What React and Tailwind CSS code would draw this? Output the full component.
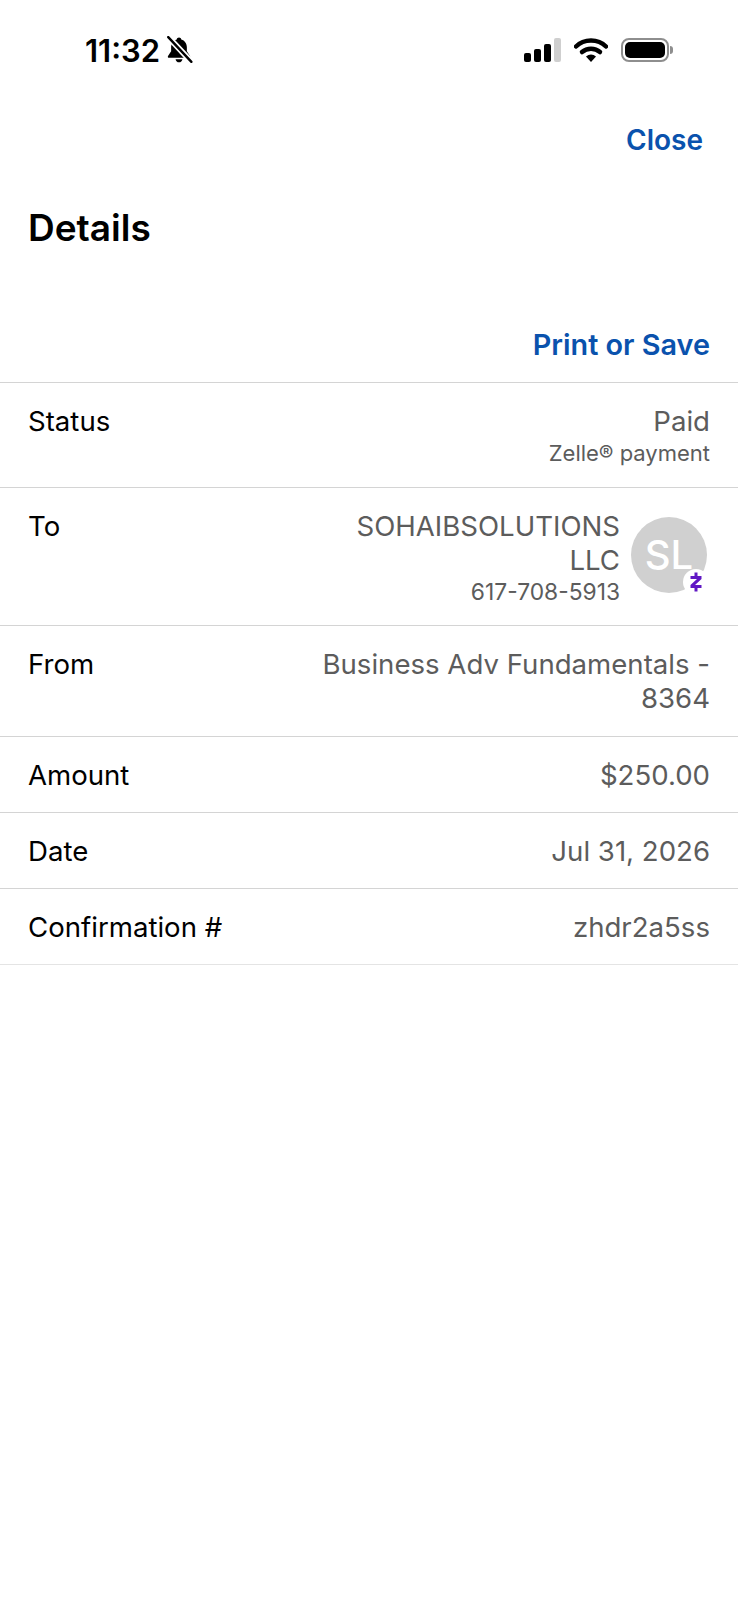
const font = { fontFamily: 'Inter, "Liberation Sans", sans-serif' };

function StatusBar() {
  return (
    <div className="flex items-center justify-between h-[100px] pl-[85px] pr-[65px]">
      <div className="flex items-center gap-[4px]">
        <span className="text-[31px] leading-none font-semibold text-black">11:32</span>
        <svg width="30" height="28" viewBox="0 0 26 26">
          <path d="M13 1.500c1.100 0 1.900.7 2.100 1.700 3.300.9 5.200 3.800 5.200 7.300v3.700l2.900 4.300c.5.8 0 1.700-.9 1.700H3.700c-.9 0-1.400-.9-.9-1.700l2.900-4.300v-3.700c0-3.500 1.900-6.400 5.200-7.300.2-1 1-1.700 2.100-1.700z" fill="#000" />
          <path d="M9.800 21.500h6.400c-.3 1.700-1.600 2.900-3.200 2.900s-2.900-1.200-3.200-2.900z" fill="#000" />
          <path d="M3 1 24.500 24" stroke="#fff" strokeWidth="5.500" />
          <path d="M3 1 24.500 24" stroke="#000" strokeWidth="2.200" strokeLinecap="round" />
        </svg>
      </div>
      <div className="flex items-center gap-[13px]">
        <div className="flex items-end gap-[3px] h-[24px]">
          <div className="w-[7px] h-[9px] rounded-[2px] bg-black" />
          <div className="w-[7px] h-[13px] rounded-[2px] bg-black" />
          <div className="w-[7px] h-[18px] rounded-[2px] bg-black" />
          <div className="w-[7px] h-[24px] rounded-[2px] bg-[#cfcfcf]" />
        </div>
        <svg width="34" height="24" viewBox="0 0 34 24">
          <path d="M2 8.500C10 .5 24 .5 32 8.500" fill="none" stroke="#000" strokeWidth="4.500" strokeLinecap="round" />
          <path d="M8 14c5-4.500 13-4.500 18 0" fill="none" stroke="#000" strokeWidth="4.500" strokeLinecap="round" />
          <path d="M12 18.500c3-2.700 7-2.700 10 0L17 24z" fill="#000" />
        </svg>
        <div className="flex items-center gap-[1px]">
          <div className="w-[48px] h-[24px] rounded-[8px] border-2 border-[#8e8e8e] p-[2px]">
            <div className="w-full h-full rounded-[5px] bg-black" />
          </div>
          <div className="w-[3px] h-[8px] rounded-r-full bg-[#8e8e8e]" />
        </div>
      </div>
    </div>
  );
}

function Row({ label, children, className = '' }) {
  return (
    <div className={`flex justify-between border-b border-[#d4d4d4] pl-[28px] pr-[28px] ${className}`}>
      <span className="text-[27.6px] leading-[34px] text-black whitespace-nowrap">{label}</span>
      {children}
    </div>
  );
}

function Avatar() {
  return (
    <div className="relative w-[76px] h-[76px] rounded-full bg-[#d0d0d0] flex items-center justify-center">
      <span className="text-[40px] leading-none font-medium text-white">SL</span>
      <div className="absolute right-[-2px] bottom-[-2px] w-[26px] h-[26px] rounded-full bg-white flex items-center justify-center">
        <svg width="14" height="22" viewBox="0 0 14 22">
          <path d="M1.500 5h11v3L6 14h6.500v3h-11v-3L8 8H1.500z" fill="#6118c4" />
          <path d="M5.500 1.500h3v4h-3zM5.500 16.500h3v4h-3z" fill="#6118c4" />
        </svg>
      </div>
    </div>
  );
}

export default function App() {
  return (
    <div className="w-[738px] h-[1600px] bg-white" style={font}>
      <StatusBar />
      <div className="flex justify-end pr-[35px] pt-[23px]">
        <span className="text-[28px] leading-[34px] font-semibold text-[#0a52ad]">Close</span>
      </div>
      <h1 className="pl-[28px] mt-[49px] text-[37px] leading-[44px] font-semibold text-black">Details</h1>
      <div className="flex justify-end pr-[28px] mt-[78px] pb-[20px] border-b border-[#d4d4d4]">
        <span className="text-[28.800px] leading-[34px] font-semibold text-[#0a52ad]">Print or Save</span>
      </div>
      <Row label="Status" className="pt-[21px] h-[105px]">
        <div className="flex flex-col items-end text-[#5c5c5c]">
          <span className="text-[27.6px] leading-[34px]">Paid</span>
          <span className="text-[22px] leading-[28px] mt-[1px]">Zelle® payment</span>
        </div>
      </Row>
      <Row label="To" className="pt-[21px] h-[138px]">
        <div className="flex items-start">
          <div className="flex flex-col items-end text-[#5c5c5c] mr-[11px]">
            <span className="text-[27.6px] leading-[34px] text-right w-[290px]">SOHAIBSOLUTIONS LLC</span>
            <span className="text-[22.800px] leading-[28px] mt-[1px]">617-708-5913</span>
          </div>
          <div className="mt-[8px] mr-[3px]"><Avatar /></div>
        </div>
      </Row>
      <Row label="From" className="pt-[21px] h-[111px]">
        <span className="text-[27.6px] leading-[34px] text-right text-[#5c5c5c] w-[400px]">Business Adv Fundamentals - 8364</span>
      </Row>
      <Row label="Amount" className="pt-[21px] h-[76px]">
        <span className="text-[27.6px] leading-[34px] text-[#5c5c5c]">$250.00</span>
      </Row>
      <Row label="Date" className="pt-[21px] h-[76px]">
        <span className="text-[27.6px] leading-[34px] text-[#5c5c5c]">Jul 31, 2026</span>
      </Row>
      <Row label="Confirmation #" className="pt-[21px] h-[76px] border-[#e4e4e4]">
        <span className="text-[27.6px] leading-[34px] text-[#5c5c5c]">zhdr2a5ss</span>
      </Row>
    </div>
  );
}
